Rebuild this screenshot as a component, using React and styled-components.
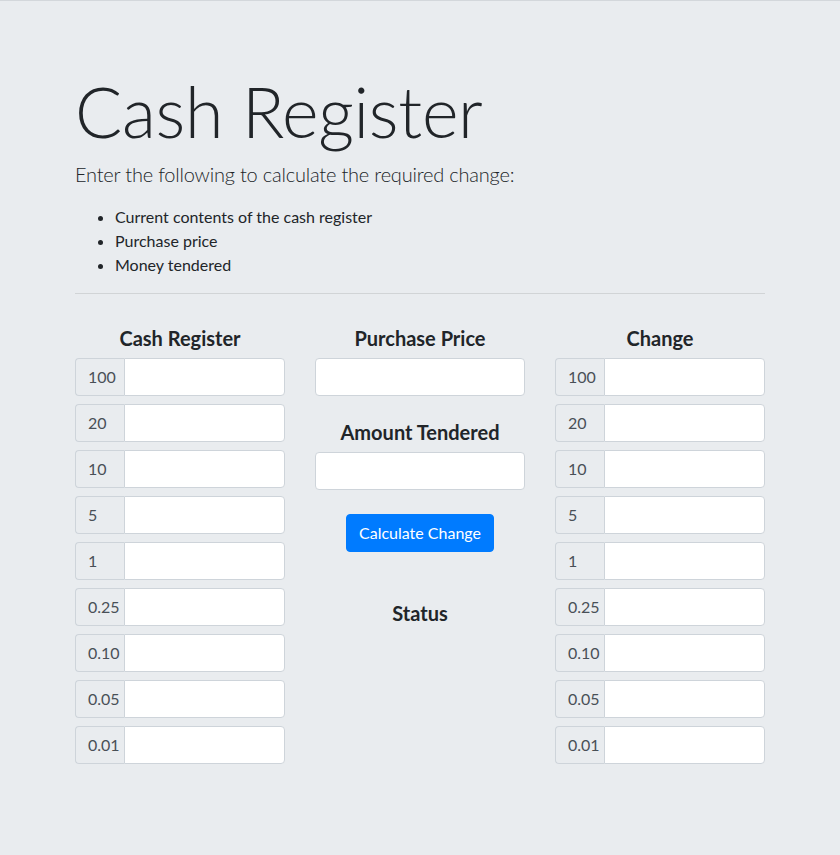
import React from 'react';
import styled, { createGlobalStyle } from 'styled-components';

const GlobalStyle = createGlobalStyle`
    * { box-sizing: border-box; }
    html, body {
        margin: 0;
        background: #e9ecef;
    }
    body {
        font-family: 'Lato', 'Noto Sans', sans-serif;
        font-size: 16px;
        line-height: 1.5;
        color: #212529;
        border-top: 1px solid #d3d7db;
        min-height: 855px;
    }
`;

const Container = styled.div`
    max-width: 720px;
    margin: 0 auto;
    padding: 64px 15px;
`;

const Title = styled.h1`
    font-size: 70px;
    font-weight: 300;
    line-height: 1.2;
    letter-spacing: -0.3px;
    margin: 4px 0 6px;
`;

const Lead = styled.p`
    font-size: 20px;
    font-weight: 300;
    letter-spacing: -0.2px;
    margin: 0 0 16px;
`;

const List = styled.ul`
    margin: 0 0 16px;
    padding-left: 40px;
`;

const Divider = styled.hr`
    border: 0;
    border-top: 1px solid rgba(0, 0, 0, 0.1);
    margin: 16px 0;
`;

const Row = styled.div`
    display: grid;
    grid-template-columns: repeat(3, minmax(0, 1fr));
    column-gap: 30px;
    margin-top: 32px;
`;

const Column = styled.div`
    display: flex;
    flex-direction: column;
    align-items: stretch;
    min-width: 0;
`;

const Heading = styled.h5`
    font-size: 20px;
    font-weight: 700;
    line-height: 1.2;
    text-align: center;
    margin: 0 0 8px;
`;

const InputGroup = styled.div`
    display: flex;
    height: 38px;
    margin-bottom: 8px;
`;

const Prepend = styled.span`
    display: flex;
    align-items: center;
    width: 49px;
    flex: none;
    padding: 0 12px;
    background: #e9ecef;
    color: #495057;
    border: 1px solid #ced4da;
    border-right: 0;
    border-radius: 4px 0 0 4px;
`;

const Input = styled.input`
    display: block;
    width: 100%;
    min-width: 0;
    height: 38px;
    font: inherit;
    color: #495057;
    background: #fff;
    border: 1px solid #ced4da;
    border-radius: 4px;
    margin: 0 0 24px;
    padding: 6px 12px;
    outline: none;
`;

const GroupInput = styled(Input)`
    flex: 1;
    width: auto;
    margin: 0;
    border-radius: 0 4px 4px 0;
`;

const Button = styled.button`
    align-self: center;
    font: inherit;
    color: #fff;
    background: #007bff;
    border: 1px solid #007bff;
    border-radius: 4px;
    padding: 6px 12px;
    margin-bottom: 49px;
    cursor: pointer;
`;

const denominations = ['100', '20', '10', '5', '1', '0.25', '0.10', '0.05', '0.01'];

const DenominationColumn = ({ title }) => (
    <Column>
        <Heading>{title}</Heading>
        {denominations.map((d) => (
            <InputGroup key={d}>
                <Prepend>{d}</Prepend>
                <GroupInput type="text" />
            </InputGroup>
        ))}
    </Column>
);

const App = () => (
    <>
        <GlobalStyle />
        <Container>
            <Title>Cash Register</Title>
            <Lead>Enter the following to calculate the required change:</Lead>
            <List>
                <li>Current contents of the cash register</li>
                <li>Purchase price</li>
                <li>Money tendered</li>
            </List>
            <Divider />
            <Row>
                <DenominationColumn title="Cash Register" />
                <Column>
                    <Heading>Purchase Price</Heading>
                    <Input type="text" />
                    <Heading>Amount Tendered</Heading>
                    <Input type="text" />
                    <Button>Calculate Change</Button>
                    <Heading>Status</Heading>
                </Column>
                <DenominationColumn title="Change" />
            </Row>
        </Container>
    </>
);

export default App;
